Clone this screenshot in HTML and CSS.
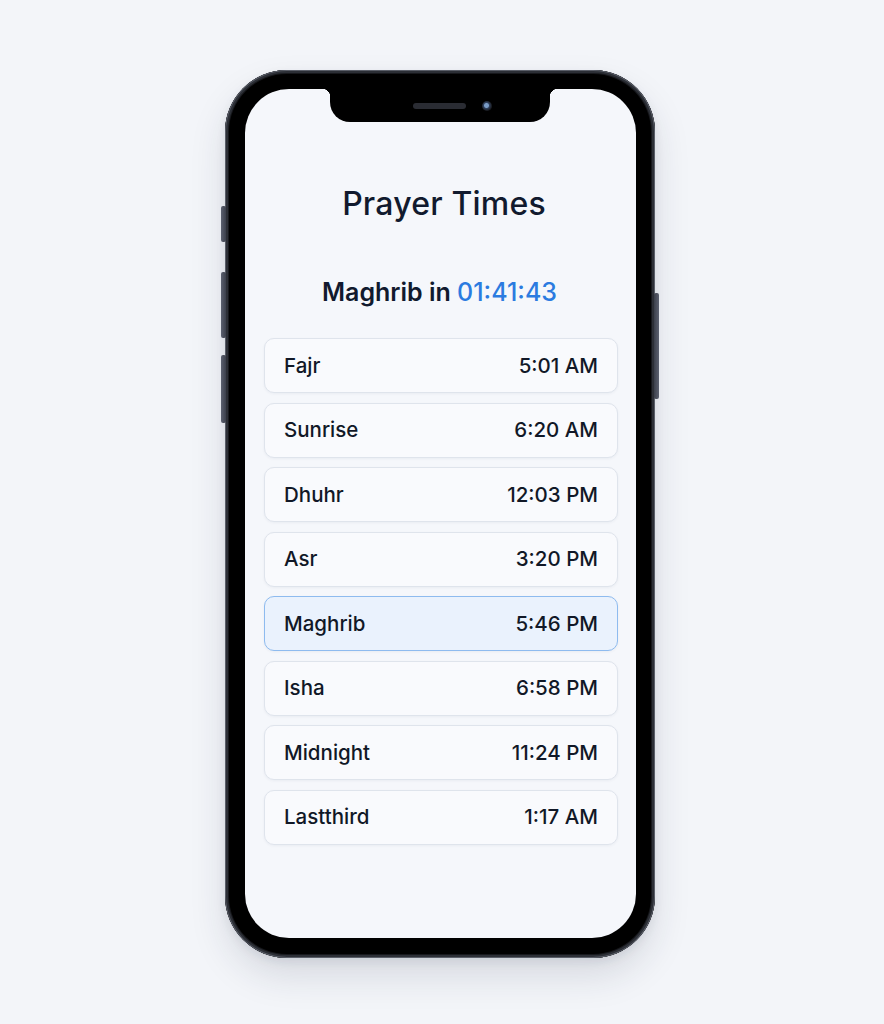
FILE: index.html
```html
<!DOCTYPE html>
<html lang="en">
<head>
<meta charset="utf-8">
<title>Prayer Times</title>
<link rel="stylesheet" href="styles.css">
</head>
<body>
<div class="stage">
  <div class="phone">
    <span class="btn btn-silent"></span>
    <span class="btn btn-vol-up"></span>
    <span class="btn btn-vol-down"></span>
    <span class="btn btn-power"></span>
    <div class="screen">
      <div class="notch">
        <span class="speaker"></span>
        <span class="camera"></span>
      </div>
      <h1 class="title">Prayer Times</h1>
      <p class="countdown">Maghrib in <span class="countdown-time">01:41:43</span></p>
      <ul class="times">
        <li class="row"><span>Fajr</span><span>5:01 AM</span></li>
        <li class="row"><span>Sunrise</span><span>6:20 AM</span></li>
        <li class="row"><span>Dhuhr</span><span>12:03 PM</span></li>
        <li class="row"><span>Asr</span><span>3:20 PM</span></li>
        <li class="row row-active"><span>Maghrib</span><span>5:46 PM</span></li>
        <li class="row"><span>Isha</span><span>6:58 PM</span></li>
        <li class="row"><span>Midnight</span><span>11:24 PM</span></li>
        <li class="row"><span>Lastthird</span><span>1:17 AM</span></li>
      </ul>
    </div>
  </div>
</div>
</body>
</html>
```
FILE: styles.css
```css
* { box-sizing: border-box; }
html, body { margin: 0; padding: 0; }
body {
  background: #f3f5f9;
  font-family: Inter, "Noto Sans", "Liberation Sans", sans-serif;
  color: #111a2c;
  width: 884px;
  height: 1024px;
  overflow: hidden;
}
.stage {
  display: flex;
  justify-content: center;
  padding-top: 70px;
  padding-right: 4px;
}
.phone {
  position: relative;
  width: 430px;
  height: 888px;
  background: #000;
  border-radius: 62px;
  padding: 19px 19px 20px 20px;
  box-shadow:
    inset 0 0 0 1px #5a5e68,
    inset 0 0 0 3px #2c2f36,
    inset 0 0 0 4px #16171b,
    0 18px 36px rgba(30, 40, 60, 0.13),
    0 4px 10px rgba(30, 40, 60, 0.08);
}
.btn {
  position: absolute;
  width: 5px;
  background: linear-gradient(90deg, #5c6170, #3b3f4a);
  border-radius: 2px;
}
.btn-silent { left: -4px; top: 136px; height: 36px; }
.btn-vol-up { left: -4px; top: 202px; height: 66px; }
.btn-vol-down { left: -4px; top: 285px; height: 68px; }
.btn-power { right: -4px; top: 223px; height: 106px; background: linear-gradient(90deg, #3b3f4a, #5c6170); }
.screen {
  position: relative;
  height: 100%;
  background: #f5f7fb;
  border-radius: 44px;
  display: flex;
  flex-direction: column;
  align-items: center;
  padding: 95px 18px 0 19px;
  overflow: hidden;
}
.notch {
  position: absolute;
  top: 0;
  left: 85px;
  width: 220px;
  height: 33px;
  background: #000;
  border-radius: 0 0 20px 20px;
  display: flex;
  justify-content: flex-start;
  align-items: center;
  gap: 16px;
  padding-left: 83px;
}
.notch::before, .notch::after {
  content: "";
  position: absolute;
  top: 0;
  width: 8px;
  height: 8px;
}
.notch::before {
  left: -8px;
  background: radial-gradient(circle at 0 100%, transparent 8px, #000 8.5px);
}
.notch::after {
  right: -8px;
  background: radial-gradient(circle at 100% 100%, transparent 8px, #000 8.5px);
}
.speaker {
  width: 53px;
  height: 6px;
  border-radius: 3px;
  background: #2a2c33;
}
.camera {
  width: 10px;
  height: 10px;
  border-radius: 50%;
  background: radial-gradient(circle at 45% 45%, #7a9cc6 0 2px, #2f405c 3px, #1a1d24 5px);
}
.title {
  margin: 0;
  padding-left: 6px;
  font-size: 32px;
  line-height: 40px;
  font-weight: 500;
  color: #111a2e;
  letter-spacing: 0.2px;
}
.countdown {
  margin: 52px 0 0 0;
  padding-right: 3px;
  font-size: 25px;
  line-height: 32px;
  font-weight: 600;
  color: #111a2e;
}
.countdown-time {
  color: #2b7be0;
  font-weight: 500;
}
.times {
  list-style: none;
  margin: 30px 0 0 0;
  padding: 0;
  width: 100%;
  display: flex;
  flex-direction: column;
  gap: 9.5px;
}
.row {
  height: 55px;
  display: flex;
  justify-content: space-between;
  align-items: center;
  padding: 0 19px 1px 19px;
  background: #f9fafd;
  border: 1px solid #dfe4ec;
  border-radius: 10px;
  box-shadow: 0 1px 3px rgba(20, 40, 80, 0.05);
  font-size: 20.5px;
  font-weight: 500;
  color: #111827;
}
.row-active {
  background: #eaf2fd;
  border-color: #8ebbef;
}
```
